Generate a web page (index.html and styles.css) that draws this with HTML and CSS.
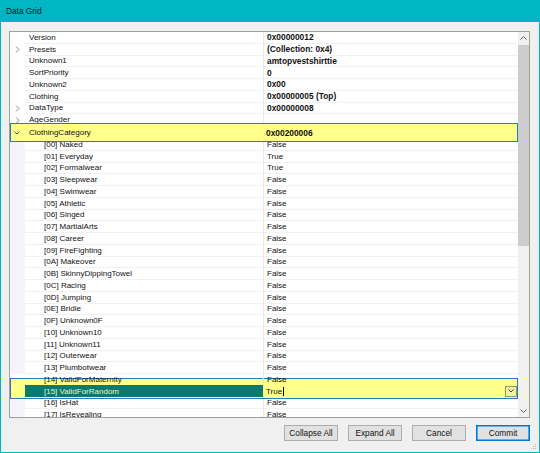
FILE: index.html
```html
<!DOCTYPE html>
<html>
<head>
<meta charset="utf-8">
<link rel="stylesheet" href="styles.css">
</head>
<body>
<div class="window">
  <div class="titlebar">Data Grid</div>
  <div class="client">
    <div class="grid">
      <div class="rows">
        <div class="row"><span class="gutter"></span><span class="name">Version</span><span class="value b">0x00000012</span></div>
        <div class="row"><span class="gutter"><svg class="chev" width="5" height="7" viewBox="0 0 5 7"><path d="M1 0.5 L4 3.5 L1 6.5" fill="none" stroke="#8a8a8a" stroke-width="1"/></svg></span><span class="name">Presets</span><span class="value b">(Collection: 0x4)</span></div>
        <div class="row"><span class="gutter"></span><span class="name">Unknown1</span><span class="value b">amtopvestshirttie</span></div>
        <div class="row"><span class="gutter"></span><span class="name">SortPriority</span><span class="value b">0</span></div>
        <div class="row"><span class="gutter"></span><span class="name">Unknown2</span><span class="value b">0x00</span></div>
        <div class="row"><span class="gutter"></span><span class="name">Clothing</span><span class="value b">0x00000005 (Top)</span></div>
        <div class="row"><span class="gutter"><svg class="chev" width="5" height="7" viewBox="0 0 5 7"><path d="M1 0.5 L4 3.5 L1 6.5" fill="none" stroke="#8a8a8a" stroke-width="1"/></svg></span><span class="name">DataType</span><span class="value b">0x00000008</span></div>
        <div class="row"><span class="gutter"><svg class="chev" width="5" height="7" viewBox="0 0 5 7"><path d="M1 0.5 L4 3.5 L1 6.5" fill="none" stroke="#8a8a8a" stroke-width="1"/></svg></span><span class="name">AgeGender</span><span class="value b"></span></div>
        <div class="row cat"><span class="gutter"><svg class="chev" width="6" height="4" viewBox="0 0 6 4"><path d="M0.5 0.5 L3 3 L5.5 0.5" fill="none" stroke="#555" stroke-width="1"/></svg></span><span class="name">ClothingCategory</span><span class="value b">0x00200006</span></div>
        <div class="row sub"><span class="gutter"></span><span class="name">[00] Naked</span><span class="value">False</span></div>
        <div class="row sub"><span class="gutter"></span><span class="name">[01] Everyday</span><span class="value">True</span></div>
        <div class="row sub"><span class="gutter"></span><span class="name">[02] Formalwear</span><span class="value">True</span></div>
        <div class="row sub"><span class="gutter"></span><span class="name">[03] Sleepwear</span><span class="value">False</span></div>
        <div class="row sub"><span class="gutter"></span><span class="name">[04] Swimwear</span><span class="value">False</span></div>
        <div class="row sub"><span class="gutter"></span><span class="name">[05] Athletic</span><span class="value">False</span></div>
        <div class="row sub"><span class="gutter"></span><span class="name">[06] Singed</span><span class="value">False</span></div>
        <div class="row sub"><span class="gutter"></span><span class="name">[07] MartialArts</span><span class="value">False</span></div>
        <div class="row sub"><span class="gutter"></span><span class="name">[08] Career</span><span class="value">False</span></div>
        <div class="row sub"><span class="gutter"></span><span class="name">[09] FireFighting</span><span class="value">False</span></div>
        <div class="row sub"><span class="gutter"></span><span class="name">[0A] Makeover</span><span class="value">False</span></div>
        <div class="row sub"><span class="gutter"></span><span class="name">[0B] SkinnyDippingTowel</span><span class="value">False</span></div>
        <div class="row sub"><span class="gutter"></span><span class="name">[0C] Racing</span><span class="value">False</span></div>
        <div class="row sub"><span class="gutter"></span><span class="name">[0D] Jumping</span><span class="value">False</span></div>
        <div class="row sub"><span class="gutter"></span><span class="name">[0E] Bridle</span><span class="value">False</span></div>
        <div class="row sub"><span class="gutter"></span><span class="name">[0F] Unknown0F</span><span class="value">False</span></div>
        <div class="row sub"><span class="gutter"></span><span class="name">[10] Unknown10</span><span class="value">False</span></div>
        <div class="row sub"><span class="gutter"></span><span class="name">[11] Unknown11</span><span class="value">False</span></div>
        <div class="row sub"><span class="gutter"></span><span class="name">[12] Outerwear</span><span class="value">False</span></div>
        <div class="row sub"><span class="gutter"></span><span class="name">[13] Plumbotwear</span><span class="value">False</span></div>
        <div class="row sub over"><span class="gutter"></span><span class="name">[14] ValidForMaternity</span><span class="value">False</span></div>
        <div class="row sub sel"><span class="gutter"></span><span class="name">[15] ValidForRandom</span><span class="value"><span class="edit">True</span><span class="caret"></span><span class="dd"><svg width="6" height="4" viewBox="0 0 6 4"><path d="M0.5 0.5 L3 3 L5.5 0.5" fill="none" stroke="#444" stroke-width="1"/></svg></span></span></div>
        <div class="row sub"><span class="gutter"></span><span class="name">[16] IsHat</span><span class="value">False</span></div>
        <div class="row sub"><span class="gutter"></span><span class="name">[17] IsRevealing</span><span class="value">False</span></div>
      </div>
      <div class="scrollbar">
        <div class="sb-btn"><svg width="7" height="4" viewBox="0 0 7 4"><path d="M0.5 3.5 L3.5 0.5 L6.5 3.5" fill="none" stroke="#606060" stroke-width="1"/></svg></div>
        <div class="sb-track"><div class="sb-thumb"></div></div>
        <div class="sb-btn"><svg width="7" height="4" viewBox="0 0 7 4"><path d="M0.5 0.5 L3.5 3.5 L6.5 0.5" fill="none" stroke="#606060" stroke-width="1"/></svg></div>
      </div>
    </div>
    <div class="buttons">
      <div class="btn">Collapse All</div>
      <div class="btn">Expand All</div>
      <div class="btn">Cancel</div>
      <div class="btn default">Commit</div>
    </div>
    <svg class="grip" width="6" height="6" viewBox="0 0 6 6"><rect x="4" y="0" width="1" height="1" fill="#b8b8b8"/><rect x="2" y="2" width="1" height="1" fill="#b8b8b8"/><rect x="4" y="2" width="1" height="1" fill="#b8b8b8"/><rect x="0" y="4" width="1" height="1" fill="#b8b8b8"/><rect x="2" y="4" width="1" height="1" fill="#b8b8b8"/><rect x="4" y="4" width="1" height="1" fill="#b8b8b8"/></svg>
  </div>
</div>
</body>
</html>
```

FILE: styles.css
```css
* { box-sizing: border-box; }
html, body { margin: 0; padding: 0; }
body {
  width: 540px;
  height: 453px;
  overflow: hidden;
  font-family: "Liberation Sans", Arial, sans-serif;
  font-size: 8px;
  color: #111;
  background: #00b5c4;
}
.window {
  width: 540px;
  height: 453px;
  display: flex;
  flex-direction: column;
  background: #00b5c4;
}
.titlebar {
  height: 22px;
  flex: none;
  display: flex;
  align-items: center;
  padding-left: 6px;
  font-size: 8.3px;
  color: #0a1a1c;
}
.client {
  flex: 1;
  margin: 0 1px 1px 1px;
  background: #f0f0f0;
  padding: 9px 9px 0 8px;
  display: flex;
  flex-direction: column;
  position: relative;
}
.grid {
  height: 387px;
  flex: none;
  border: 1px solid #a0a0a0;
  background: #fff;
  display: flex;
  overflow: hidden;
}
.rows {
  width: 508px;
  flex: none;
  overflow: hidden;
}
.row {
  display: grid;
  grid-template-columns: 15px 238px 255px;
  height: 11.75px;
}
.row > span {
  display: flex;
  align-items: center;
  height: 100%;
  white-space: nowrap;
  overflow: hidden;
}
.gutter { padding-left: 5px; }
.name {
  padding-left: 4px;
  border-bottom: 1px solid #f1f1f1;
}
.value {
  padding-left: 3px;
  border-left: 1px solid #e8e8e8;
  border-bottom: 1px solid #f1f1f1;
}
.value.b { font-weight: bold; font-size: 8.4px; }
.row.sub .gutter { background: #f4f4fa; }
.row.sub .name { padding-left: 19px; }

.row.cat {
  position: relative;
  height: 19px;
  margin: -3px 0 -3px 0;
  background: #ffff8a;
  border: 1px solid #2a79c0;
  grid-template-columns: 14px 238px 254px;
}
.row.cat .gutter { padding-left: 3px; }
.row.cat .name, .row.cat .value { border: none; }

.row.over {
  position: relative;
  z-index: 2;
}
.row.over .gutter { background: transparent; }
.row.over .name, .row.over .value { border-bottom: none; }

.row.sel {
  position: relative;
  z-index: 1;
  height: 21px;
  margin: -7.75px 0 -2px 0;
  background: #ffff8a;
  border: 1px solid #2a79c0;
  grid-template-columns: 14px 238px 254px;
  align-items: end;
  padding-bottom: 1px;
}
.row.sel > span { height: 12px; }
.row.sel .gutter { background: transparent; }
.row.sel .name {
  background: #0b7a6c;
  color: #eef3c0;
  border: none;
}
.row.sel .value { border: none; padding-right: 0; }
.caret {
  width: 1px;
  height: 9px;
  background: #000;
  margin-left: 0.5px;
}
.dd {
  margin-left: auto;
  width: 12px;
  height: 11px;
  border: 1px solid #8f9862;
  background: #f2f2a6;
  display: flex;
  align-items: center;
  justify-content: center;
}
.scrollbar {
  width: 11px;
  flex: none;
  background: #f0f0f0;
  display: flex;
  flex-direction: column;
}
.sb-btn {
  height: 12px;
  flex: none;
  display: flex;
  align-items: center;
  justify-content: center;
}
.sb-track { flex: 1; }
.sb-thumb {
  margin: 1px 0 0 0;
  height: 201px;
  background: #cdcdcd;
}
.buttons {
  margin-top: 7px;
  display: flex;
  justify-content: flex-end;
  gap: 10px;
}
.btn {
  width: 54px;
  height: 16px;
  border: 1px solid #adadad;
  background: #e1e1e1;
  display: flex;
  align-items: center;
  justify-content: center;
  font-size: 8.3px;
  color: #111;
}
.btn.default {
  border-color: #0078d7;
  box-shadow: inset 0 0 0 0.6px #0078d7;
}
.grip {
  position: absolute;
  right: 2px;
  bottom: 2px;
}
```
